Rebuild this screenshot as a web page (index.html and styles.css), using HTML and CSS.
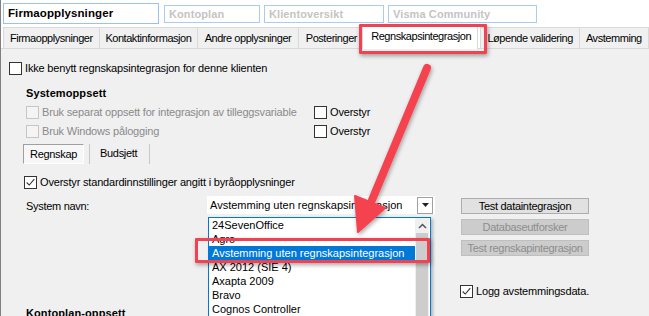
FILE: index.html
```html
<!DOCTYPE html>
<html>
<head>
<meta charset="utf-8">
<link rel="stylesheet" href="styles.css">
</head>
<body>
<div class="win">
  <div class="toptabs">
    <div class="ttab active">Firmaopplysninger</div>
    <div class="ttab t2">Kontoplan</div>
    <div class="ttab t3">Klientoversikt</div>
    <div class="ttab t4">Visma Community</div>
  </div>
  <div class="subtabs">
    <div class="stab s1">Firmaopplysninger</div>
    <div class="stab s2">Kontaktinformasjon</div>
    <div class="stab s3">Andre opplysninger</div>
    <div class="stab s4">Posteringer</div>
    <div class="stab sel">Regnskapsintegrasjon</div>
    <div class="stab s6">Løpende validering</div>
    <div class="stab s7">Avstemming</div>
  </div>
  <div class="content">
    <div class="row r1"><span class="cb"></span><span class="lbl">Ikke benytt regnskapsintegrasjon for denne klienten</span></div>
    <div class="heading h1">Systemoppsett</div>
    <div class="row r2">
      <div class="pair wide"><span class="cb dis"></span><span class="lbl disl">Bruk separat oppsett for integrasjon av tilleggsvariable</span></div>
      <div class="pair"><span class="cb"></span><span class="lbl">Overstyr</span></div>
    </div>
    <div class="row r3">
      <div class="pair wide"><span class="cb dis"></span><span class="lbl disl">Bruk Windows pålogging</span></div>
      <div class="pair"><span class="cb"></span><span class="lbl">Overstyr</span></div>
    </div>
    <div class="minitabs">
      <div class="mtab on">Regnskap</div>
      <div class="mtab">Budsjett</div>
    </div>
    <div class="row r4"><span class="cb chk"><svg viewBox="0 0 13 13" width="11" height="11"><path d="M2 6.5 L5 9.5 L11 2.5" fill="none" stroke="#333" stroke-width="1.3"/></svg></span><span class="lbl">Overstyr standardinnstillinger angitt i byråopplysninger</span></div>
    <div class="lower">
      <div class="left">
        <span class="lbl sn">System navn:</span>
        <div class="combo"><span class="ctext">Avstemming uten regnskapsintegrasjon</span><span class="cbtn"><svg viewBox="0 0 7 4" width="7" height="4"><path d="M0 0 H7 L3.5 4 Z" fill="#222"/></svg></span></div>
      </div>
      <div class="right">
        <div class="btn">Test dataintegrasjon</div>
        <div class="btn off">Databaseutforsker</div>
        <div class="btn off">Test regnskapintegrasjon</div>
        <div class="row logg"><span class="cb chk"><svg viewBox="0 0 13 13" width="11" height="11"><path d="M2 6.5 L5 9.5 L11 2.5" fill="none" stroke="#333" stroke-width="1.3"/></svg></span><span class="lbl">Logg avstemmingsdata.</span></div>
      </div>
    </div>
    <div class="heading h2">Kontoplan-oppsett</div>
  </div>

  <div class="dlist">
    <div class="items">
      <div class="it">24SevenOffice</div>
      <div class="it">Agro</div>
      <div class="it hi">Avstemming uten regnskapsintegrasjon</div>
      <div class="it">AX 2012 (SIE 4)</div>
      <div class="it">Axapta 2009</div>
      <div class="it">Bravo</div>
      <div class="it">Cognos Controller</div>
    </div>
    <div class="sbar">
      <div class="sup"><svg viewBox="0 0 9 6" width="9" height="6"><path d="M1 5 L4.5 1.5 L8 5" fill="none" stroke="#555" stroke-width="1.5"/></svg></div>
      <div class="thumb"></div>
    </div>
  </div>

  <div class="redbox rb1"></div>
  <div class="redbox rb2"></div>
  <svg class="arrow" width="649" height="316" viewBox="0 0 649 316">
    <defs>
      <filter id="sh" x="-20%" y="-20%" width="140%" height="140%">
        <feDropShadow dx="1" dy="2" stdDeviation="2" flood-color="#000" flood-opacity="0.35"/>
      </filter>
    </defs>
    <g filter="url(#sh)">
      <line x1="427" y1="68" x2="372" y2="200" stroke="#f44250" stroke-width="8" stroke-linecap="round"/>
      <path d="M358 232 L355 196 L385 208 Z" fill="#f44250" stroke="#f44250" stroke-width="2" stroke-linejoin="round"/>
    </g>
  </svg>
</div>
</body>
</html>
```
FILE: styles.css
```css
html, body {
  margin: 0;
  padding: 0;
}
body {
  width: 649px;
  height: 316px;
  overflow: hidden;
  background: #f0f0f0;
  font-family: "Liberation Sans", Arial, sans-serif;
  font-size: 11px;
  color: #000;
}
.win {
  position: relative;
  width: 648px;
  height: 316px;
  border-left: 1px solid #808080;
  overflow: hidden;
}
.toptabs {
  height: 27px;
  background: #fff;
  display: flex;
  align-items: flex-start;
  box-sizing: border-box;
  padding-top: 3px;
  padding-left: 2px;
}
.ttab {
  box-sizing: border-box;
  height: 18px;
  margin-top: 2px;
  border: 1px solid #a8cdf0;
  font-weight: bold;
  font-size: 11px;
  color: #c4c4c4;
  padding-left: 4px;
  line-height: 16px;
  letter-spacing: 0.1px;
}
.ttab.active {
  margin-top: 0;
  height: 21px;
  width: 156px;
  color: #000;
  border-color: #99c3ea;
  line-height: 18px;
  padding-left: 4px;
  font-size: 11.5px;
}
.ttab.t2 { width: 96px; margin-left: 5px; }
.ttab.t3 { width: 120px; margin-left: 4px; }
.ttab.t4 { width: 149px; margin-left: 4px; }

.subtabs {
  height: 22px;
  box-sizing: border-box;
  display: flex;
  align-items: flex-end;
  padding-left: 2px;
  border-bottom: 1px solid #d9d9d9;
  background: #fff;
}
.stab {
  box-sizing: border-box;
  height: 21px;
  border: 1px solid #d9d9d9;
  border-bottom: none;
  border-left: none;
  background: #f0f0f0;
  text-align: center;
  line-height: 20px;
  letter-spacing: -0.45px;
  white-space: nowrap;
  overflow: hidden;
}
.stab.s1 { width: 98px; border-left: 1px solid #d9d9d9; }
.stab.s2 { width: 100px; }
.stab.s3 { width: 102px; }
.stab.s4 { width: 64px; text-align: left; padding-left: 7px; border-right: none; }
.stab.sel {
  width: 118px;
  height: 24px;
  margin-bottom: -1px;
  background: #fff;
  line-height: 20px;
  padding-left: 2px;
  border-left: 1px solid #d9d9d9;
}
.stab.s6 { width: 101px; border-left: 1px solid #d9d9d9; margin-left: 2px; }
.stab.s7 { width: 70px; text-align: left; padding-left: 6px; }

.content {
  padding-left: 8px;
  padding-top: 13px;
}
.row {
  display: flex;
  align-items: center;
  height: 13px;
}
.pair {
  display: flex;
  align-items: center;
}
.pair.wide { width: 288px; }
.cb {
  box-sizing: border-box;
  width: 13px;
  height: 13px;
  border: 1px solid #333;
  background: #fff;
  flex: none;
  display: flex;
  align-items: center;
  justify-content: center;
}
.cb.dis {
  border-color: #c6c6c6;
  background: #f4f4f4;
}
.lbl {
  margin-left: 3px;
  letter-spacing: -0.18px;
  white-space: nowrap;
  line-height: 13px;
}
.disl { color: #8a8a8a; }
.heading {
  font-weight: bold;
  letter-spacing: 0.1px;
  padding-left: 17px;
  height: 13px;
  line-height: 13px;
}
.h1 { margin-top: 12px; }
.r2 { margin-top: 6px; padding-left: 17px; }
.r3 { margin-top: 6px; padding-left: 17px; }
.minitabs {
  margin-top: 6px;
  margin-left: 14px;
  height: 20px;
  display: flex;
}
.mtab {
  box-sizing: border-box;
  height: 20px;
  line-height: 18px;
  padding: 0 10px 0 10px;
  border-right: 1px solid #c8c8c8;
  letter-spacing: -0.3px;
}
.mtab.on {
  width: 61px;
  border: 1px solid #a0a0a0;
  border-right-color: #fff;
  border-bottom-color: #fff;
  background: #f7f7f7;
  padding: 0 6px;
  margin-right: 5px;
}
.mtab.on + .mtab {
  border-left: 1px solid #c8c8c8;
  padding-left: 10px;
  width: 61px;
}
.r4 { margin-top: 12px; padding-left: 15px; }

.lower {
  margin-top: 7px;
  display: flex;
  height: 100px;
}
.left {
  display: flex;
  align-items: flex-start;
  width: 452px;
}
.sn {
  margin-left: 17px;
  width: 181px;
  margin-top: 4px;
  letter-spacing: -0.3px;
}
.combo {
  margin-left: 0;
  width: 228px;
  height: 18px;
  background: #fff;
  display: flex;
  align-items: center;
  justify-content: space-between;
}
.ctext {
  padding-left: 3px;
  font-size: 11px;
  letter-spacing: 0;
  white-space: nowrap;
}
.cbtn {
  box-sizing: border-box;
  width: 16px;
  height: 17px;
  border: 1px solid #a0a0a0;
  background: #fff;
  display: flex;
  align-items: center;
  justify-content: center;
  margin-right: 2px;
}
.right {
  display: flex;
  flex-direction: column;
  gap: 5px;
  padding-top: 2px;
}
.btn {
  box-sizing: border-box;
  width: 128px;
  height: 16px;
  border: 1px solid #adadad;
  background: #e1e1e1;
  text-align: center;
  line-height: 14px;
  letter-spacing: -0.3px;
  white-space: nowrap;
}
.btn.off {
  background: #cccccc;
  border-color: #bfbfbf;
  color: #8d8d8d;
}
.logg {
  margin-top: 24px;
  margin-left: -1px;
}
.h2 {
  margin-top: 11px;
}

.dlist {
  position: absolute;
  left: 207px;
  top: 217px;
  width: 223px;
  height: 110px;
  box-sizing: border-box;
  border: 1px solid #0078d7;
  background: #fff;
  display: flex;
  box-shadow: 2px 2px 3px rgba(0,0,0,0.25);
}
.items {
  flex: 1;
  padding-top: 0;
}
.it {
  height: 14px;
  line-height: 14px;
  padding-left: 3px;
  white-space: nowrap;
}
.it.hi {
  background: #0078d7;
  color: #fff;
}
.sbar {
  width: 14px;
  display: flex;
  flex-direction: column;
  background: #f0f0f0;
  margin-right: 1px;
}
.sup {
  height: 15px;
  display: flex;
  align-items: center;
  justify-content: center;
}
.thumb {
  flex: 1;
  background: #cdcdcd;
  margin: 0 1px;
}

.redbox {
  position: absolute;
  box-sizing: border-box;
  border: 3px solid #f24150;
  box-shadow: 1px 2px 4px rgba(0,0,0,0.35);
  border-radius: 1px;
}
.rb1 { left: 358px; top: 24px; width: 128px; height: 30px; }
.rb2 { left: 194px; top: 238px; width: 235px; height: 25px; }
.arrow {
  position: absolute;
  left: -1px;
  top: 0;
}
```
